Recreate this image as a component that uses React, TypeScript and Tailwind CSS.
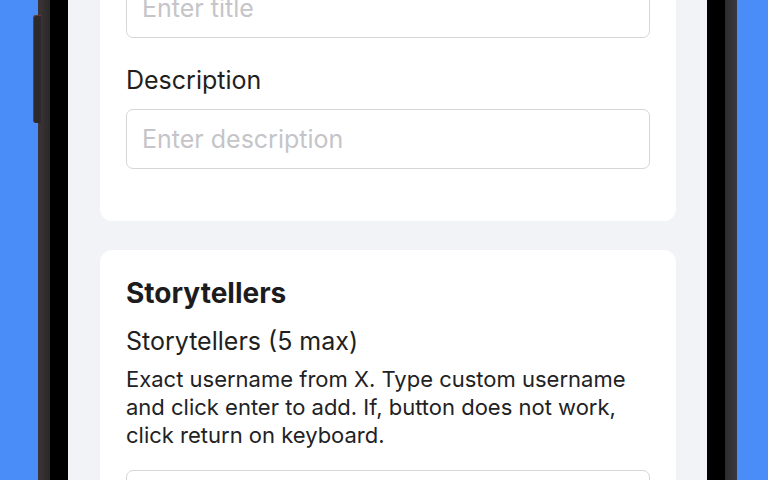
export default function App() {
  return (
    <div className="relative flex h-[480px] w-[768px] overflow-hidden bg-[#4b8df8] font-['Inter',sans-serif]">
      {/* phone frame */}
      <div className="ml-[38px] flex h-full">
        <div className="w-[12px] bg-gradient-to-r from-[#3d3537] to-[#2a2829]" />
        <div className="w-[18px] bg-black" />
        <div className="flex w-[639px] flex-col gap-[29px] bg-[#f2f3f6] pl-[32px] pr-[31px]">
          <div className="-mt-[48px] rounded-[12px] bg-white px-[26px] pb-[52px] pt-[26px]">
            <input
              readOnly
              placeholder="Enter title"
              className="h-[60px] w-full rounded-[7px] border border-[#d6d6da] bg-white px-[15px] text-[25px] text-[#1c1c1e] outline-none placeholder:text-[#c5c5c9]"
            />
            <div className="mb-[14px] mt-[28px] text-[25px] leading-[29px] text-[#1f1f21]">Description</div>
            <input
              readOnly
              placeholder="Enter description"
              className="h-[60px] w-full rounded-[7px] border border-[#d6d6da] bg-white px-[15px] text-[25px] text-[#1c1c1e] outline-none placeholder:text-[#c5c5c9]"
            />
          </div>

          <div className="rounded-[12px] bg-white px-[26px] pt-[27px]">
            <h2 className="text-[28px] font-bold leading-[33px] text-[#1c1c1e]">Storytellers</h2>
            <div className="mt-[17px] text-[25px] leading-[29px] text-[#1f1f21]">Storytellers (5 max)</div>
            <p className="mt-[9px] text-[22px] leading-[28px] text-[#222224]">
              Exact username from X. Type custom username and click enter to add. If, button does not work, click
              return on keyboard.
            </p>
            <input
              readOnly
              placeholder=""
              className="mt-[21px] h-[60px] w-full rounded-[7px] border border-[#d6d6da] bg-white px-[15px] text-[25px] outline-none"
            />
          </div>
        </div>
        <div className="w-[18px] bg-black" />
        <div className="w-[12px] bg-gradient-to-r from-[#2c2c2e] to-[#3a3a3c]" />
      </div>

      {/* side button */}
      <div className="absolute left-[33px] top-[15px] h-[108px] w-[8px] rounded-l-[3px] border-l border-t border-[#6a3a34] bg-[#2e2a2c]" />
    </div>
  );
}
